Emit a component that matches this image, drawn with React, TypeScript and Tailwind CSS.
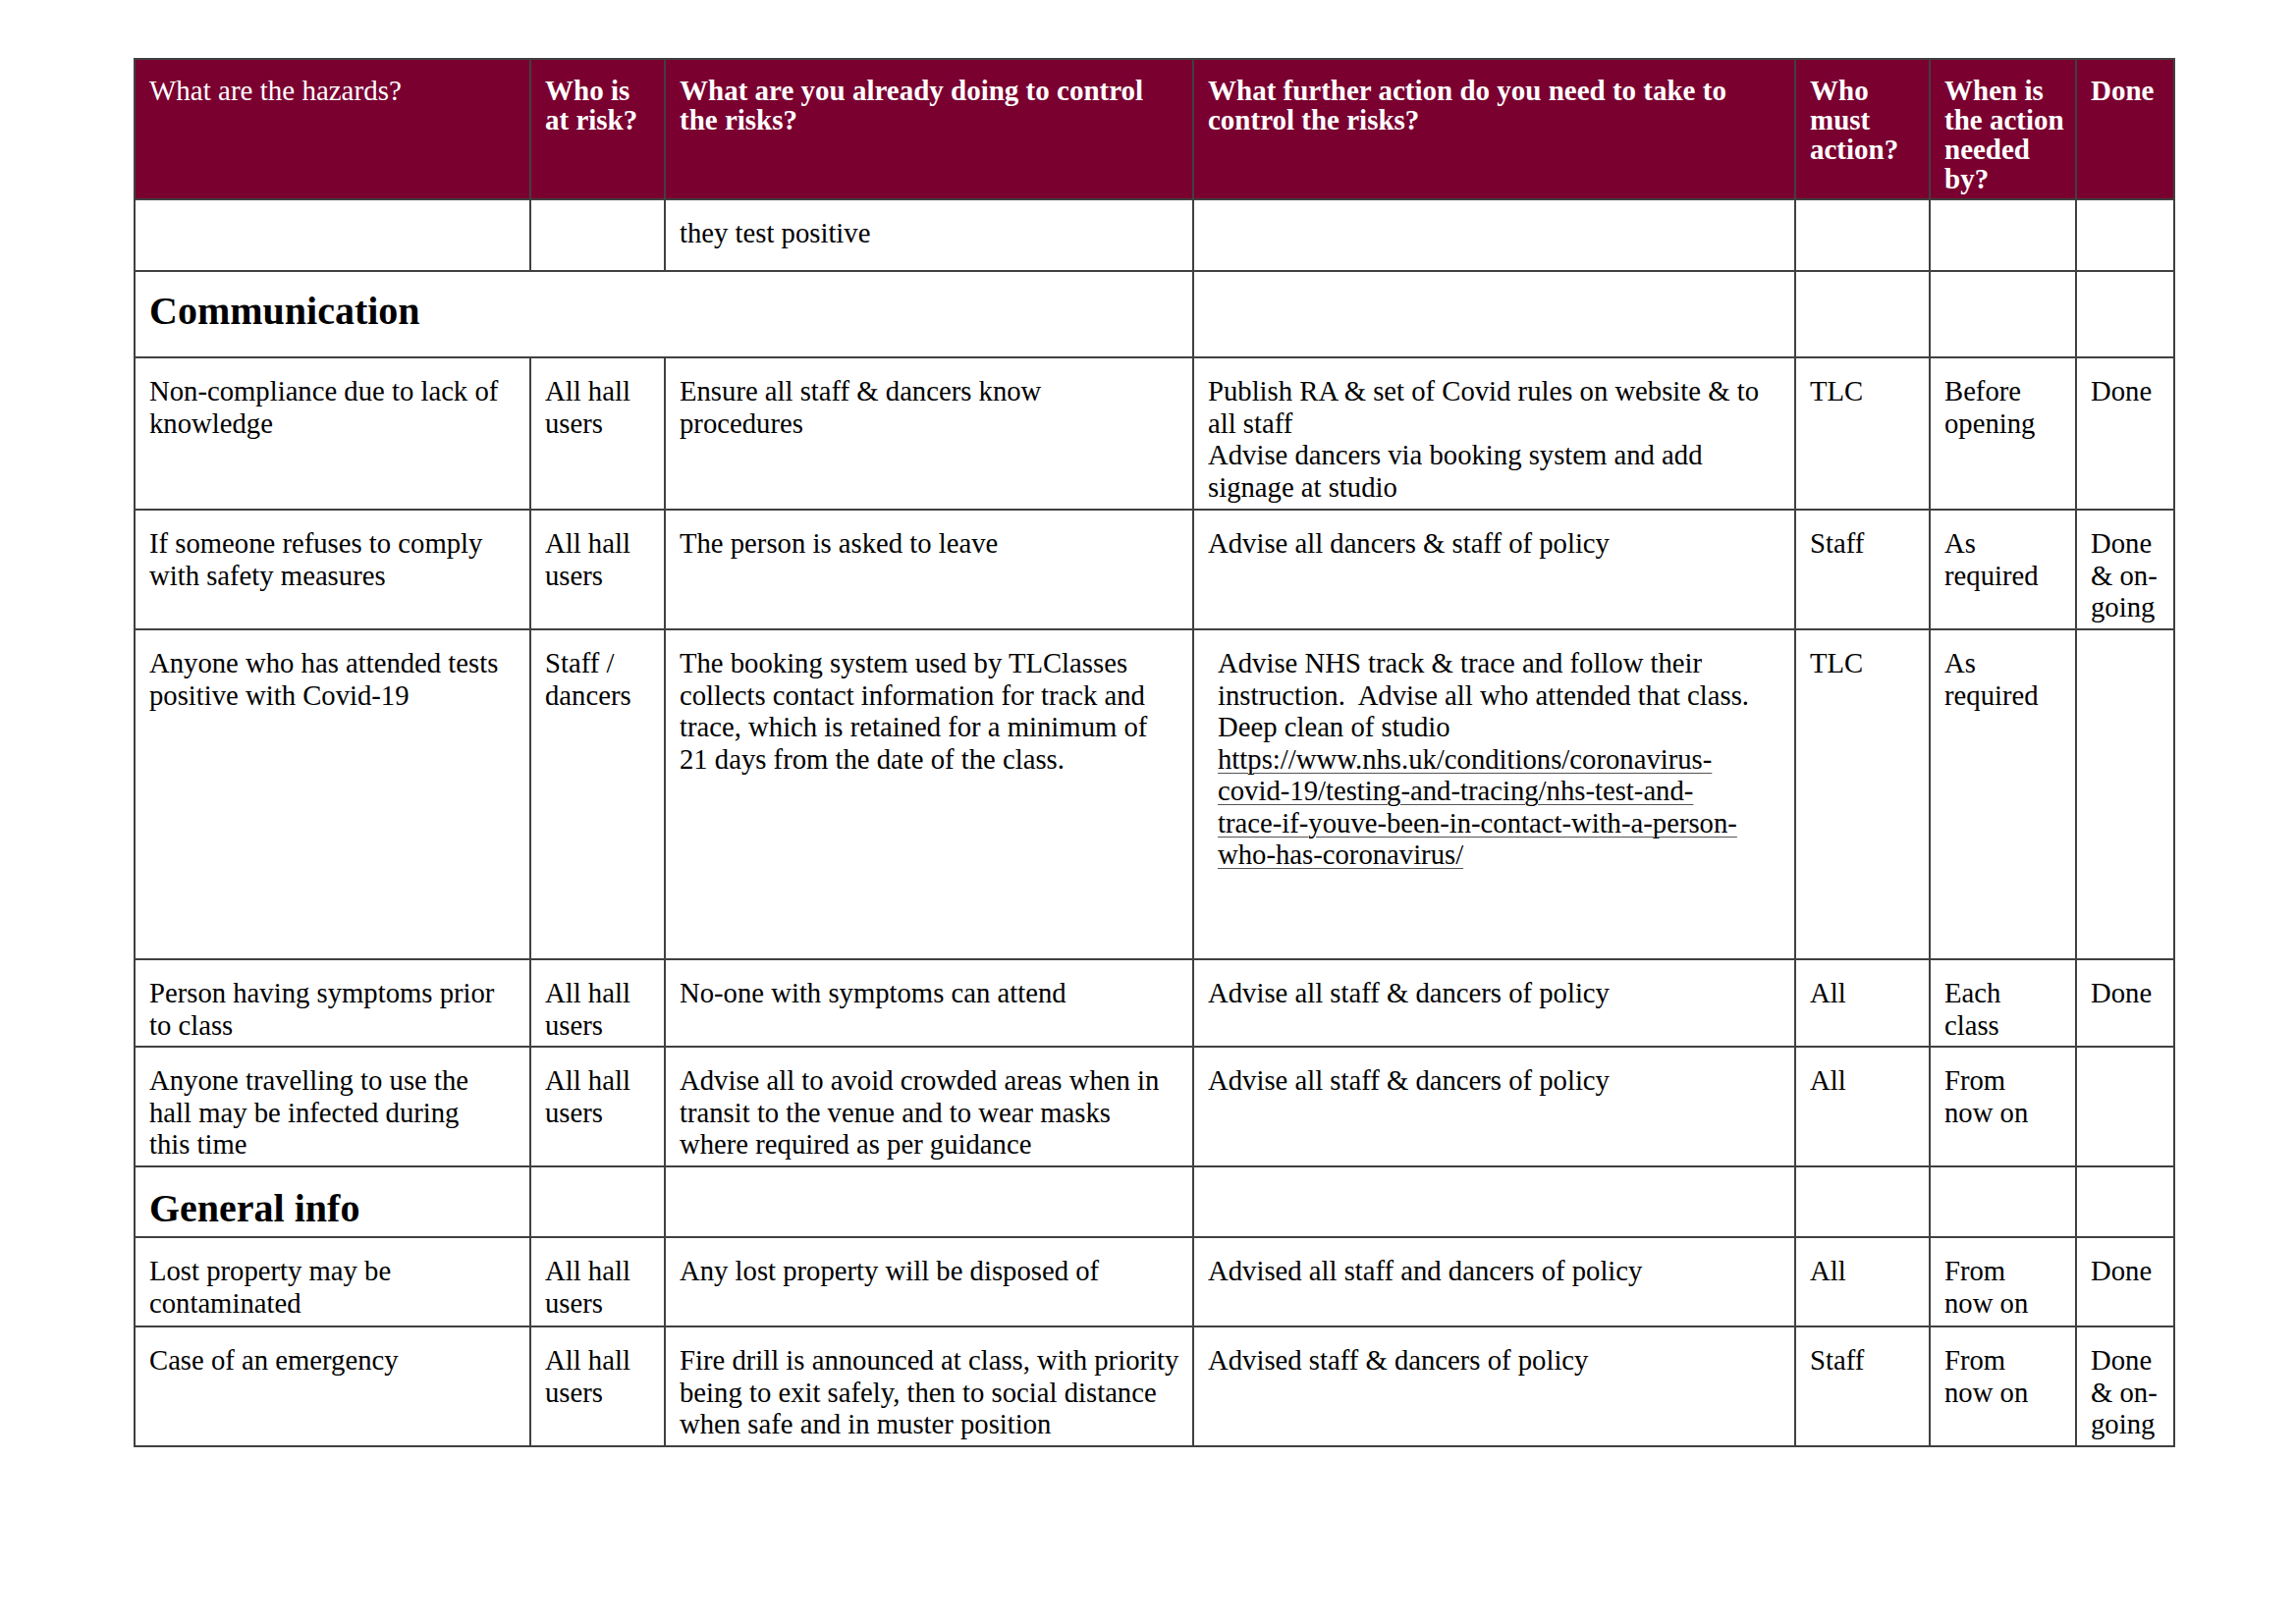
import React from 'react';

type Cell = string[];

interface RiskRow {
  height: number;
  cells: Cell[];
}

const COLS = [403, 137, 538, 613, 137, 149, 100];

const rowsTop: RiskRow[] = [
  { height: 73, cells: [[], [], ['they test positive'], [], [], [], []] },
];

const commRows: RiskRow[] = [
  {
    height: 155,
    cells: [
      ['Non-compliance due to lack of', 'knowledge'],
      ['All hall', 'users'],
      ['Ensure all staff & dancers know', 'procedures'],
      ['Publish RA & set of Covid rules on website & to', 'all staff', 'Advise dancers via booking system and add', 'signage at studio'],
      ['TLC'],
      ['Before', 'opening'],
      ['Done'],
    ],
  },
  {
    height: 122,
    cells: [
      ['If someone refuses to comply', 'with safety measures'],
      ['All hall', 'users'],
      ['The person is asked to leave'],
      ['Advise all dancers & staff of policy'],
      ['Staff'],
      ['As', 'required'],
      ['Done', '& on-', 'going'],
    ],
  },
];

const afterCovid: RiskRow[] = [
  {
    height: 89,
    cells: [
      ['Person having symptoms prior', 'to class'],
      ['All hall', 'users'],
      ['No-one with symptoms can attend'],
      ['Advise all staff & dancers of policy'],
      ['All'],
      ['Each', 'class'],
      ['Done'],
    ],
  },
  {
    height: 122,
    cells: [
      ['Anyone travelling to use the', 'hall may be infected during', 'this time'],
      ['All hall', 'users'],
      ['Advise all to avoid crowded areas when in', 'transit to the venue and to wear masks', 'where required as per guidance'],
      ['Advise all staff & dancers of policy'],
      ['All'],
      ['From', 'now on'],
      [],
    ],
  },
];

const generalRows: RiskRow[] = [
  {
    height: 91,
    cells: [
      ['Lost property may be', 'contaminated'],
      ['All hall', 'users'],
      ['Any lost property will be disposed of'],
      ['Advised all staff and dancers of policy'],
      ['All'],
      ['From', 'now on'],
      ['Done'],
    ],
  },
  {
    height: 122,
    cells: [
      ['Case of an emergency'],
      ['All hall', 'users'],
      ['Fire drill is announced at class, with priority', 'being to exit safely, then to social distance', 'when safe and in muster position'],
      ['Advised staff & dancers of policy'],
      ['Staff'],
      ['From', 'now on'],
      ['Done', '& on-', 'going'],
    ],
  },
];

const link = [
  'https://www.nhs.uk/conditions/coronavirus-',
  'covid-19/testing-and-tracing/nhs-test-and-',
  'trace-if-youve-been-in-contact-with-a-person-',
  'who-has-coronavirus/',
];

const td = 'border-2 border-[#404040] align-top px-[14px] pt-[17px] text-[28.7px] leading-[32.5px] text-black';
const th = 'border-2 border-[#404040] align-top px-[14px] pt-[16px] text-[29px] leading-[30px] text-white text-left';

function Lines({ lines }: { lines: string[] }) {
  return (
    <>
      {lines.map((l, i) => (
        <div key={i} className="whitespace-pre">
          {l}
        </div>
      ))}
    </>
  );
}

function BodyRow({ row }: { row: RiskRow }) {
  return (
    <tr style={{ height: row.height }}>
      {row.cells.map((c, i) => (
        <td key={i} className={td}>
          <Lines lines={c} />
        </td>
      ))}
    </tr>
  );
}

export default function App() {
  return (
    <div className="min-h-[1653px] w-[2338px] bg-white pl-[136px] pt-[59px] font-['Liberation_Serif',serif]">
      <table className="table-fixed border-collapse w-[2079px]">
        <colgroup>
          {COLS.map((w, i) => (
            <col key={i} style={{ width: w }} />
          ))}
        </colgroup>
        <thead>
          <tr className="h-[143px] bg-[#7a0030]">
            <th className={`${th} font-normal`}>What are the hazards?</th>
            <th className={`${th} font-bold`}>
              <Lines lines={['Who is', 'at risk?']} />
            </th>
            <th className={`${th} font-bold text-[29.5px]`}>
              <Lines lines={['What are you already doing to control', 'the risks?']} />
            </th>
            <th className={`${th} font-bold text-[29.5px]`}>
              <Lines lines={['What further action do you need to take to', 'control the risks?']} />
            </th>
            <th className={`${th} font-bold text-[27px]`}>
              <Lines lines={['Who', 'must', 'action?']} />
            </th>
            <th className={`${th} font-bold text-[27px]`}>
              <Lines lines={['When is', 'the action', 'needed', 'by?']} />
            </th>
            <th className={`${th} font-bold text-[27px]`}>Done</th>
          </tr>
        </thead>
        <tbody>
          {rowsTop.map((r, i) => (
            <BodyRow key={i} row={r} />
          ))}

          <tr className="h-[88px]">
            <td colSpan={3} className="border-2 border-[#404040] align-top px-[14px] pt-[17px] text-[40px] leading-[46px] font-bold text-black">
              Communication
            </td>
            <td className={td}></td>
            <td className={td}></td>
            <td className={td}></td>
            <td className={td}></td>
          </tr>

          {commRows.map((r, i) => (
            <BodyRow key={i} row={r} />
          ))}

          {/* track & trace row, further-action cell is indented a bit more */}
          <tr className="h-[336px]">
            <td className={td}>
              <Lines lines={['Anyone who has attended tests', 'positive with Covid-19']} />
            </td>
            <td className={td}>
              <Lines lines={['Staff /', 'dancers']} />
            </td>
            <td className={td}>
              <Lines
                lines={[
                  'The booking system used by TLClasses',
                  'collects contact information for track and',
                  'trace, which is retained for a minimum of',
                  '21 days from the date of the class.',
                ]}
              />
            </td>
            <td className={`${td} pl-[24px]`}>
              <Lines
                lines={[
                  'Advise NHS track & trace and follow their',
                  'instruction.  Advise all who attended that class.',
                  'Deep clean of studio',
                ]}
              />
              {link.map((l, i) => (
                <div key={i} className="whitespace-pre">
                  <span className="underline decoration-1 decoration-[#555] underline-offset-[4px]">{l}</span>
                </div>
              ))}
            </td>
            <td className={td}>TLC</td>
            <td className={td}>
              <Lines lines={['As', 'required']} />
            </td>
            <td className={td}></td>
          </tr>

          {afterCovid.map((r, i) => (
            <BodyRow key={i} row={r} />
          ))}

          <tr className="h-[72px]">
            <td className="border-2 border-[#404040] align-top px-[14px] pt-[19px] text-[40px] leading-[46px] font-bold text-black">
              General info
            </td>
            <td className={td}></td>
            <td className={td}></td>
            <td className={td}></td>
            <td className={td}></td>
            <td className={td}></td>
            <td className={td}></td>
          </tr>

          {generalRows.map((r, i) => (
            <BodyRow key={i} row={r} />
          ))}
        </tbody>
      </table>
    </div>
  );
}
